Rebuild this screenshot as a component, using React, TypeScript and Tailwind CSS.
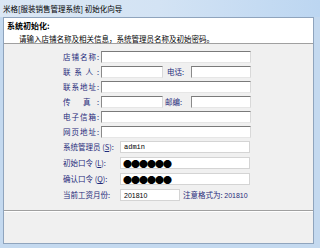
import React from "react";

const labelColor = "text-[#1f2a7a]";

function Input({ className = "", children }: { className?: string; children?: React.ReactNode }) {
  return (
    <div
      className={[
        "h-[12px] bg-white border border-t-[#7a7a7a] border-l-[#8a8a8a] border-r-[#d9d9d9] border-b-[#e6e6e6] flex items-center",
        className,
      ].join(" ")}
    >
      {children}
    </div>
  );
}

function FlatInput({ className = "", children }: { className?: string; children?: React.ReactNode }) {
  return (
    <div className={["h-[12px] bg-white border border-[#d4d4d4] flex items-center pl-[2px]", className].join(" ")}>
      {children}
    </div>
  );
}

function Label({ chars }: { chars: string[] }) {
  return (
    <div className={`w-[36px] flex justify-between ${labelColor}`}>
      {chars.map((c, i) => (
        <span key={i}>{c}</span>
      ))}
    </div>
  );
}

function Accel({ text, k }: { text: string; k: string }) {
  return (
    <div className={`w-[57px] ${labelColor}`}>
      {text} (<span className="underline">{k}</span>):
    </div>
  );
}

export default function App() {
  return (
    <div className="w-[320px] h-[248px] bg-[#c4d9ef] flex flex-col font-['Noto_Sans_CJK_SC',sans-serif] text-[7.5px] leading-none overflow-hidden">
      <div className="h-[17px] shrink-0 flex items-center px-[3px] bg-gradient-to-r from-[#dbe7f4] via-[#d3e3f4] to-[#bcd6f1] text-black">
        米格[服装销售管理系统] 初始化向导
      </div>

      <div className="flex-1 ml-[3px] mr-[6px] mb-[4px] border border-[#8fa4bd] bg-[#f0f0f0] flex flex-col">
        <div className="h-[26px] shrink-0 bg-white border-b border-[#a0a0a0] pl-[3px] pt-[4px]">
          <div className="font-bold text-[8px]">系统初始化:</div>
          <div className="pl-[12px] pt-[5px]">请输入店铺名称及相关信息，系统管理员名称及初始密码。</div>
        </div>

        <div className="h-[167px] shrink-0 pl-[59px] pt-[5px] border-b border-[#a0a0a0]">
          <div className="h-[15px] flex items-center">
            <Label chars={["店", "铺", "名", "称", ":"]} />
            <Input className="ml-[2px] w-[150px]" />
          </div>
          <div className="h-[15px] flex items-center">
            <Label chars={["联", "系", "人", ":"]} />
            <Input className="ml-[2px] w-[62px]" />
            <div className={`ml-[4px] w-[24px] ${labelColor}`}>电话:</div>
            <Input className="w-[60px]" />
          </div>
          <div className="h-[15px] flex items-center">
            <Label chars={["联", "系", "地", "址", ":"]} />
            <Input className="ml-[2px] w-[150px]" />
          </div>
          <div className="h-[15px] flex items-center">
            <Label chars={["传", "", "真", ":"]} />
            <Input className="ml-[2px] w-[62px]" />
            <div className={`ml-[2px] w-[26px] ${labelColor}`}>邮编:</div>
            <Input className="w-[60px]" />
          </div>
          <div className="h-[15px] flex items-center">
            <Label chars={["电", "子", "信", "箱", ":"]} />
            <Input className="ml-[2px] w-[150px]" />
          </div>
          <div className="h-[15px] flex items-center">
            <Label chars={["网", "页", "地", "址", ":"]} />
            <Input className="ml-[2px] w-[150px]" />
          </div>

          <div className="h-[16px] flex items-center">
            <Accel text="系统管理员" k="S" />
            <FlatInput className="w-[130px] font-['Liberation_Mono',monospace] text-[7px] pl-[3px]">admin</FlatInput>
          </div>
          <div className="h-[16px] flex items-center">
            <Accel text="初始口令" k="L" />
            <FlatInput className="w-[130px] text-[9px] tracking-[-1px]">●●●●●●</FlatInput>
          </div>
          <div className="h-[16px] flex items-center">
            <Accel text="确认口令" k="Q" />
            <FlatInput className="w-[130px] text-[9px] tracking-[-1px] border-[#a9c3df]">●●●●●●</FlatInput>
          </div>
          <div className="h-[16px] flex items-center">
            <div className={`w-[57px] ${labelColor}`}>当前工资月份:</div>
            <FlatInput className="w-[60px] font-['Liberation_Sans',sans-serif] text-[7px] pl-[3px]">201810</FlatInput>
            <div className={`ml-[3px] ${labelColor}`}>
              注意格式为: <span className="font-['Liberation_Sans',sans-serif] text-[7px]">201810</span>
            </div>
          </div>
        </div>
        <div className="flex-1 border-t border-white" />
      </div>
    </div>
  );
}
